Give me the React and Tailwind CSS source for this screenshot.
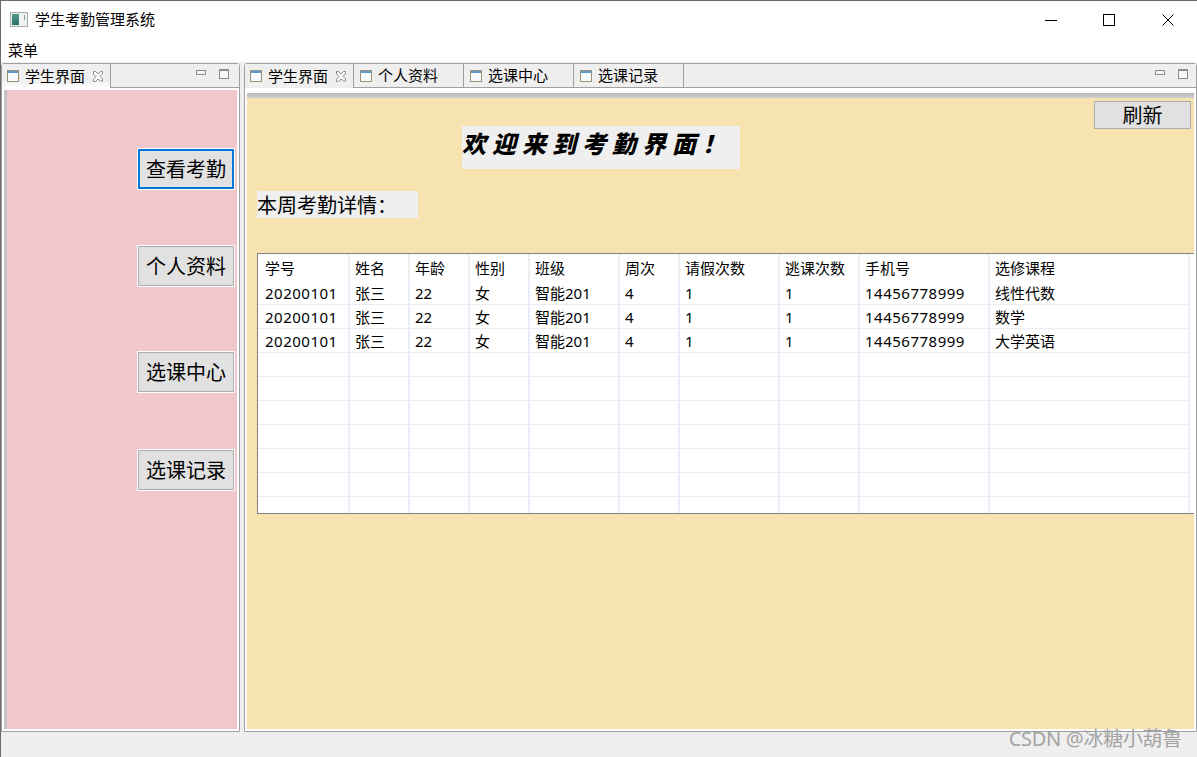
const columns = [
  { title: "学号", width: "w-[92px]" },
  { title: "姓名", width: "w-[60px]" },
  { title: "年龄", width: "w-[60px]" },
  { title: "性别", width: "w-[60px]" },
  { title: "班级", width: "w-[90px]" },
  { title: "周次", width: "w-[60px]" },
  { title: "请假次数", width: "w-[100px]" },
  { title: "逃课次数", width: "w-[80px]" },
  { title: "手机号", width: "w-[130px]" },
  { title: "选修课程", width: "w-[200px]" },
];

const rows = [
  ["20200101", "张三", "22", "女", "智能201", "4", "1", "1", "14456778999", "线性代数"],
  ["20200101", "张三", "22", "女", "智能201", "4", "1", "1", "14456778999", "数学"],
  ["20200101", "张三", "22", "女", "智能201", "4", "1", "1", "14456778999", "大学英语"],
  ...Array(7).fill(Array(10).fill("")),
];

function WindowIcon() {
  return (
    <svg width="18" height="15" viewBox="0 0 18 15">
      <defs>
        <linearGradient id="win" x1="0" y1="0" x2="0" y2="1">
          <stop offset="0" stopColor="#4f9c8c" />
          <stop offset="1" stopColor="#2f6f62" />
        </linearGradient>
      </defs>
      <rect x="0.5" y="0.5" width="17" height="14" fill="#e8ecec" stroke="#a9b0b0" />
      <rect x="2" y="2" width="7" height="11" fill="url(#win)" />
      <rect x="9" y="2" width="7" height="11" fill="#f0f4f2" />
      <rect x="14" y="3" width="1" height="5" fill="#7fa39a" />
    </svg>
  );
}

function ViewIcon() {
  return (
    <svg width="12" height="12" viewBox="0 0 12 12" className="shrink-0">
      <rect x="0.5" y="0.5" width="11" height="11" fill="#f8fbfe" stroke="#9a8f6e" />
      <rect x="1" y="1" width="10" height="2" fill="#5d9bd5" />
    </svg>
  );
}

function CloseIcon() {
  return (
    <svg width="12" height="11" viewBox="0 0 12 11" className="shrink-0">
      <path
        d="M1.5 .5h2L6 3l2.500-2.500h2v2L8 5.500l2.500 2.500v2h-2L6 8l-2.500 2.500h-2v-2L4 5.500 1.500 3z"
        fill="#fff"
        stroke="#8a8a8a"
      />
    </svg>
  );
}

function WindowControls() {
  return (
    <div className="ml-auto flex items-center pr-[23px]">
      <svg width="12" height="12" viewBox="0 0 12 12" className="mr-[46px]">
        <path d="M0 6.500h12" stroke="#000" />
      </svg>
      <svg width="12" height="12" viewBox="0 0 12 12" className="mr-[47px]">
        <rect x="0.5" y="0.5" width="11" height="11" fill="none" stroke="#000" />
      </svg>
      <svg width="12" height="12" viewBox="0 0 12 12">
        <path d="M.5 .5l11 11M11.500 .5l-11 11" stroke="#000" fill="none" />
      </svg>
    </div>
  );
}

function PaneControls({ className }) {
  return (
    <div className={`ml-auto flex items-start gap-[13px] pt-[5px] ${className}`}>
      <div className="w-[10px] h-[5px] border border-[#8c8c8c] bg-[#f4f4f4] mt-px" />
      <div className="w-[10px] h-[10px] border border-[#8c8c8c] border-t-2 bg-[#f8f8f8]" />
    </div>
  );
}

function Tab({ label, active, white }) {
  return (
    <div
      className={`h-[24px] flex items-center gap-[6px] border-r border-[#a0a0a0] ${
        active ? "w-[109px] pl-[5px]" : "w-[110px] pl-[6px] border-b"
      } ${white ? "bg-linear-to-b from-[#efefef] from-70% to-white" : ""}`}
    >
      <ViewIcon />
      <span className="text-[15px] leading-none whitespace-nowrap">{label}</span>
      {active && <div className="ml-px"><CloseIcon /></div>}
    </div>
  );
}

function SideButton({ label, focused, className }) {
  return (
    <button
      className={`w-[96px] h-[40px] pt-px bg-[#e1e1e1] text-[20px] leading-none outline outline-1 outline-white ${
        focused ? "border-2 border-[#0078d7]" : "border border-[#adadad]"
      } ${className}`}
    >
      {label}
    </button>
  );
}

export default function App() {
  return (
    <div
      className="relative w-[1197px] h-[757px] flex flex-col overflow-hidden bg-[#efefef] border-t border-l border-[#6b6b6b] text-black"
      style={{ fontFamily: '"Noto Sans", "Noto Sans CJK SC", sans-serif' }}
    >
      {/* title bar */}
      <div className="h-[37px] shrink-0 bg-white flex items-center pl-[9px]">
        <WindowIcon />
        <span className="ml-[7px] text-[15px] leading-none">学生考勤管理系统</span>
        <WindowControls />
      </div>

      {/* menu */}
      <div className="h-[24px] shrink-0 bg-white pl-[7px] text-[15px] leading-[24px]">菜单</div>

      {/* panes */}
      <div className="h-[670px] shrink-0 pt-px flex">
        <div className="w-[239px] mr-[4px] flex flex-col border border-[#a0a0a0] rounded-t-[3px] bg-white">
          <div className="h-[24px] shrink-0 flex bg-[#efefef]">
            <Tab label="学生界面" active white />
            <div className="flex-1 flex border-b border-[#a0a0a0]">
              <PaneControls className="pr-[10px]" />
            </div>
          </div>
          <div className="flex-1 flex px-[2px] pt-[2px] pb-[2px]">
            <div className="w-[3px] bg-[#c4c4c4]" />
            <div className="flex-1 bg-[#f0c8cc] flex flex-col items-end pr-[3px]">
              <SideButton label="查看考勤" focused className="mt-[59px]" />
              <SideButton label="个人资料" className="mt-[57px]" />
              <SideButton label="选课中心" className="mt-[66px]" />
              <SideButton label="选课记录" className="mt-[58px]" />
            </div>
          </div>
        </div>

        <div className="flex-1 flex flex-col border border-[#a0a0a0] rounded-t-[3px] bg-white">
          <div className="h-[24px] shrink-0 flex bg-[#efefef]">
            <Tab label="学生界面" active />
            <Tab label="个人资料" />
            <Tab label="选课中心" />
            <Tab label="选课记录" />
            <div className="flex-1 flex border-b border-[#a0a0a0]">
              <PaneControls className="pr-[8px]" />
            </div>
          </div>
          <div className="flex-1 flex flex-col px-[2px] pt-[5px] pb-[2px]">
            <div className="h-[5px] shrink-0 bg-linear-to-b from-[#b8b8b8] to-[#d0d0d0]" />
            <div className="flex-1 bg-[#f6e3b0] flex flex-col">
              <button className="self-end mt-[3px] mr-[3px] w-[97px] h-[28px] pt-[2px] bg-[#e1e1e1] border border-[#adadad] text-[20px] leading-none">
                刷新
              </button>
              <div className="ml-[215px] mt-[-3px] w-[278px] h-[43px] pb-[8px] bg-[#efefef] flex items-center">
                <span className="text-[24px] leading-none font-black italic tracking-[6px] whitespace-nowrap">
                  欢迎来到考勤界面！
                </span>
              </div>
              <div className="ml-[10px] mt-[22px] w-[161px] h-[27px] bg-[#efefef] text-[20px] leading-[29px] whitespace-nowrap">
                本周考勤详情：
              </div>
              <div className="ml-[10px] mt-[35px] h-[261px] bg-white border-y border-l border-[#808080] overflow-hidden">
                <table className="table-fixed border-separate border-spacing-0 w-[932px] text-[15px]">
                  <colgroup>
                    {columns.map((c) => (
                      <col key={c.title} className={c.width} />
                    ))}
                  </colgroup>
                  <thead>
                    <tr>
                      {columns.map((c, j) => (
                        <th
                          key={c.title}
                          className={`h-[27px] pt-[2px] text-left font-normal leading-none border-r-2 border-[#eeeeee] whitespace-nowrap ${
                            j === 0 ? "pl-[7px]" : "pl-[5px]"
                          }`}
                        >
                          {c.title}
                        </th>
                      ))}
                    </tr>
                  </thead>
                  <tbody>
                    {rows.map((row, i) => (
                      <tr key={i}>
                        {row.map((cell, j) => (
                          <td
                            key={j}
                            className={`h-[24px] pt-[2px] leading-none border-r-2 border-b border-r-[#e9effa] border-b-[#ebedf0] whitespace-nowrap ${
                              j === 0 ? "pl-[7px]" : "pl-[5px]"
                            } ${j === 0 || j === 8 ? "tracking-[0.5px]" : ""}`}
                          >
                            {cell}
                          </td>
                        ))}
                      </tr>
                    ))}
                  </tbody>
                </table>
              </div>
            </div>
          </div>
        </div>
      </div>

      {/* status bar */}
      <div className="flex-1" />

      {/* watermark */}
      <div className="absolute right-[15px] bottom-[8px] text-[20px] leading-none text-[#a3a3a3] tracking-[-0.3px] whitespace-nowrap">
        CSDN @冰糖小葫鲁
      </div>
    </div>
  );
}
